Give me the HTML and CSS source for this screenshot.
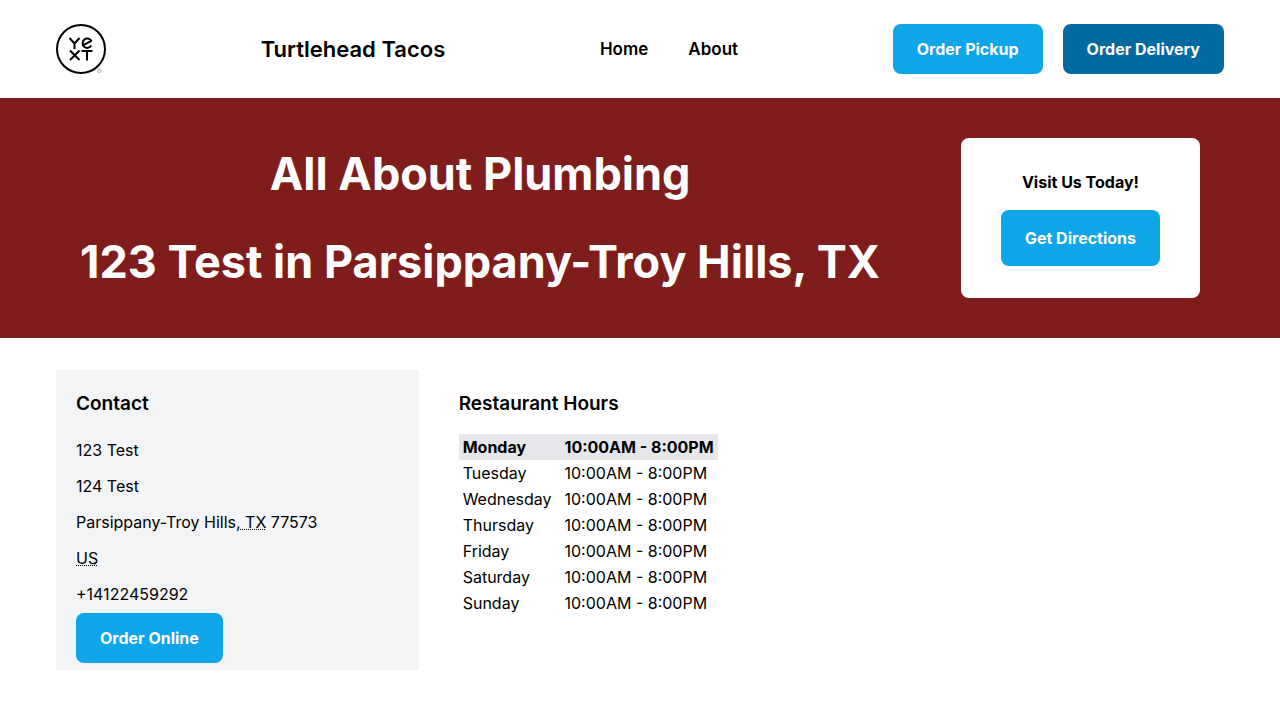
FILE: index.html
```html
<!DOCTYPE html>
<html lang="en">
<head>
<meta charset="utf-8">
<meta name="viewport" content="width=device-width, initial-scale=1">
<title>Turtlehead Tacos</title>
<link rel="stylesheet" href="styles.css">
</head>
<body>
<header class="site-header">
  <svg class="logo" viewBox="0 0 50 50" role="img" aria-label="Yext">
    <circle cx="25" cy="25" r="24" fill="none" stroke="#000" stroke-width="2"/>
    <g fill="none" stroke="#000" stroke-width="2">
      <path d="M13.500 14l5 5.500 5-5.500M18.500 19.500V25"/>
      <path d="M27.500 21L35.300 16.800A4.700 4.700 0 1 0 35.300 21.600" stroke-linejoin="round"/>
      <path d="M14 26.500l9.500 9.500M23.500 26.500L14 36M25.500 27h11M31 27v9.500"/>
    </g>
    <circle cx="43.300" cy="46.800" r="2" fill="#e2e2e2" stroke="#aaa" stroke-width=".6"/>
  </svg>
  <p class="brand">Turtlehead Tacos</p>
  <nav class="nav">
    <a href="#">Home</a>
    <a href="#">About</a>
  </nav>
  <div class="actions">
    <a class="button" href="#">Order Pickup</a>
    <a class="button button-dark" href="#">Order Delivery</a>
  </div>
</header>
<section class="hero">
  <div class="hero-text">
    <h1>All About Plumbing</h1>
    <h1>123 Test in Parsippany-Troy Hills, TX</h1>
  </div>
  <div class="visit">
    <p class="visit-title">Visit Us Today!</p>
    <a class="button button-tall" href="#">Get Directions</a>
  </div>
</section>
<main class="content">
  <section class="contact">
    <h2>Contact</h2>
    <address class="address">
      <div>123 Test</div>
      <div>124 Test</div>
      <div>Parsippany-Troy Hills,<abbr title="Texas"> TX</abbr> 77573</div>
      <div><abbr title="United States">US</abbr></div>
      <div>+14122459292</div>
    </address>
    <a class="button" href="#">Order Online</a>
  </section>
  <section class="hours">
    <h2>Restaurant Hours</h2>
    <table class="hours-table">
      <tbody>
        <tr class="today"><td>Monday</td><td>10:00AM - 8:00PM</td></tr>
        <tr><td>Tuesday</td><td>10:00AM - 8:00PM</td></tr>
        <tr><td>Wednesday</td><td>10:00AM - 8:00PM</td></tr>
        <tr><td>Thursday</td><td>10:00AM - 8:00PM</td></tr>
        <tr><td>Friday</td><td>10:00AM - 8:00PM</td></tr>
        <tr><td>Saturday</td><td>10:00AM - 8:00PM</td></tr>
        <tr><td>Sunday</td><td>10:00AM - 8:00PM</td></tr>
      </tbody>
    </table>
  </section>
</main>
</body>
</html>
```
FILE: styles.css
```css
* { box-sizing: border-box; }
body { margin: 0; background: #fff; color: #000; font: 16px/24px Inter, sans-serif; }
h1, h2, p { margin: 0; }
a { color: inherit; text-decoration: none; }
abbr { text-decoration: underline dotted 1px; }
.site-header { display: flex; align-items: center; justify-content: space-between; padding: 24px 56px; }
.logo { width: 50px; height: 50px; display: block; }
.brand { font-size: 22px; line-height: 32px; font-weight: 600; }
.nav { display: flex; gap: 40px; font-size: 17px; line-height: 28px; font-weight: 600; }
.actions { display: flex; gap: 20px; }
.button { display: inline-block; padding: 13px 24px; border-radius: 8px; background: #0ea5e9; color: #fff; font-weight: 700; }
.button-dark { background: #0369a1; }
.button-tall { padding: 16px 24px; }
.hero { display: flex; align-items: center; justify-content: space-between; padding: 40px 80px; background: #7f1d1d; }
.hero-text { display: grid; gap: 40px; color: #fff; text-align: center; }
.hero-text h1 { font-size: 45px; line-height: 48px; font-weight: 700; }
.visit { display: grid; gap: 16px; padding: 32px 40px; border-radius: 8px; background: #fff; text-align: center; }
.visit-title { font-weight: 700; }
.content { display: grid; grid-template-columns: repeat(3, 1fr); column-gap: 40px; padding: 32px 56px; }
h2 { font-size: 19px; line-height: 28px; font-weight: 600; }
.contact { padding: 20px 20px 7px; background: #f3f4f6; }
.address { display: grid; gap: 12px; padding: 20px 0 7px; font-style: normal; }
.hours { padding-top: 20px; }
.hours-table { margin-top: 16px; border-collapse: collapse; }
.hours-table td { padding: 1px 4px; }
.hours-table td:first-child { padding-right: 9px; }
.today { background: #e5e7eb; font-weight: 700; }
```
